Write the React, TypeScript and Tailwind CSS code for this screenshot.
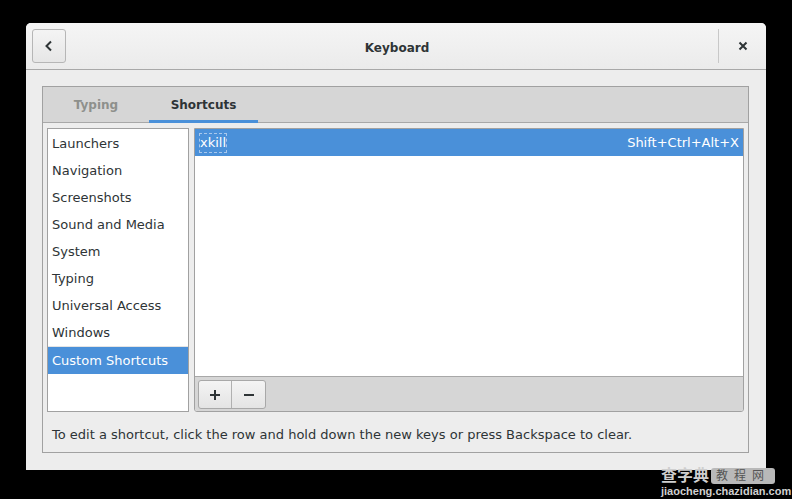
import React from "react";

const font = { fontFamily: '"DejaVu Sans", "Noto Sans CJK SC", sans-serif' };

const categories = [
  "Launchers",
  "Navigation",
  "Screenshots",
  "Sound and Media",
  "System",
  "Typing",
  "Universal Access",
  "Windows",
];

export default function App() {
  return (
    <div
      className="relative w-[792px] h-[499px] bg-black pt-[23px] pl-[26px] overflow-hidden text-[13px] text-[#2e3436]"
      style={font}
    >
      <div className="w-[740px] h-[447px] bg-[#ededed] rounded-t-[5px] flex flex-col overflow-hidden">
        {/* Header bar */}
        <div className="h-[47px] shrink-0 flex items-center bg-gradient-to-b from-[#f5f5f5] to-[#ebebeb] border-b border-[#a8a8a8] px-[6px]">
          <button className="w-[34px] h-[34px] rounded-[3px] border border-[#b6b6b6] bg-gradient-to-b from-[#f4f4f4] to-[#e6e6e6] flex items-center justify-center">
            <svg width="12" height="12" viewBox="0 0 12 12">
              <path d="M8 1.5 L3.5 6 L8 10.5" fill="none" stroke="#2e3436" strokeWidth="2" />
            </svg>
          </button>
          <div className="flex-1 text-center font-bold text-[12px] text-[#2e3436] pl-[10px] pt-[3px]">Keyboard</div>
          <div className="w-px h-[34px] bg-[#c8c8c8] mr-[17px]" />
          <div className="w-[14px] h-[14px] flex items-center justify-center mr-[10px]">
            <svg width="10" height="10" viewBox="0 0 10 10">
              <path d="M1.5 1.5 L8.5 8.5 M8.5 1.5 L1.5 8.5" stroke="#2e3436" strokeWidth="2" />
            </svg>
          </div>
        </div>

        {/* Content */}
        <div className="flex-1 pt-[16px] pl-[16px] pr-[17px] pb-[17px] flex">
          <div className="flex-1 border border-[#a1a1a1] flex flex-col">
            {/* Tabs */}
            <div className="h-[36px] shrink-0 bg-[#d6d6d6] border-b border-[#a8a8a8] flex items-stretch pl-[9px]">
              <div className="w-[88px] flex items-center justify-center pt-[1px] font-bold text-[12px] text-[#8e908c]">Typing</div>
              <div className="ml-[9px] w-[109px] flex items-center justify-center pt-[1px] font-bold text-[12px] text-[#2e3436] relative">
                Shortcuts
                <div className="absolute left-0 right-0 bottom-[-1px] h-[3px] bg-[#4a90d9]" />
              </div>
            </div>

            <div className="flex-1 flex flex-col px-[4px] pt-[5px]">
              <div className="h-[284px] flex gap-[5px]">
                {/* Left list */}
                <div className="w-[142px] border border-[#a1a1a1] bg-white flex flex-col pt-[1px]">
                  {categories.map((c) => (
                    <div key={c} className="h-[27px] flex items-center pl-[4px] whitespace-nowrap">
                      {c}
                    </div>
                  ))}
                  <div className="h-[1px] bg-[#e4e4e4]" />
                  <div className="h-[27px] flex items-center pl-[4px] bg-[#4a90d9] text-white whitespace-nowrap">Custom Shortcuts</div>
                </div>

                {/* Right list */}
                <div className="flex-1 border border-[#a1a1a1] rounded-b-[3px] flex flex-col overflow-hidden">
                  <div className="flex-1 bg-white">
                    <div className="h-[27px] bg-[#4a90d9] text-white flex items-center justify-between px-[4px]">
                      <span className="border border-dashed border-[#a9c8ec] leading-[18px]">xkill</span>
                      <span>Shift+Ctrl+Alt+X</span>
                    </div>
                  </div>
                  <div className="h-[35px] shrink-0 bg-[#d6d6d6] border-t border-[#a8a8a8] pt-[3px] pl-[3px] flex items-start">
                    <div className="flex h-[29px] rounded-[3px] border border-[#a8a8a8] bg-gradient-to-b from-[#f4f4f4] to-[#e4e4e4] overflow-hidden">
                      <div className="w-[33px] flex items-center justify-center border-r border-[#b0b0b0]">
                        <svg width="12" height="12" viewBox="0 0 12 12">
                          <path d="M6 1 V11 M1 6 H11" stroke="#2e3436" strokeWidth="2" />
                        </svg>
                      </div>
                      <div className="w-[33px] flex items-center justify-center">
                        <svg width="12" height="12" viewBox="0 0 12 12">
                          <path d="M1 6 H11" stroke="#2e3436" strokeWidth="2" />
                        </svg>
                      </div>
                    </div>
                  </div>
                </div>
              </div>
              <div className="pl-[5px] pt-[13px]">
                To edit a shortcut, click the row and hold down the new keys or press Backspace to clear.
              </div>
            </div>
          </div>
        </div>
      </div>

      {/* Watermark overlay */}
      <div className="absolute left-[661px] top-[467px] flex flex-col items-start">
        <div className="flex items-center gap-[2px] h-[18px]">
          <span className="font-bold text-[16px] leading-[18px] text-[#cfcfcf]">查字典</span>
          <span className="h-[16px] px-[5px] rounded-[3px] bg-[#b9b9b9] text-[#555] text-[12px] leading-[16px] tracking-[6px]">教程网</span>
        </div>
        <div
          className="text-[11px] leading-[12px] font-bold text-[#d0d0d0] whitespace-nowrap"
          style={{ fontFamily: '"Liberation Sans", sans-serif' }}
        >
          jiaocheng.chazidian.com
        </div>
      </div>
    </div>
  );
}
